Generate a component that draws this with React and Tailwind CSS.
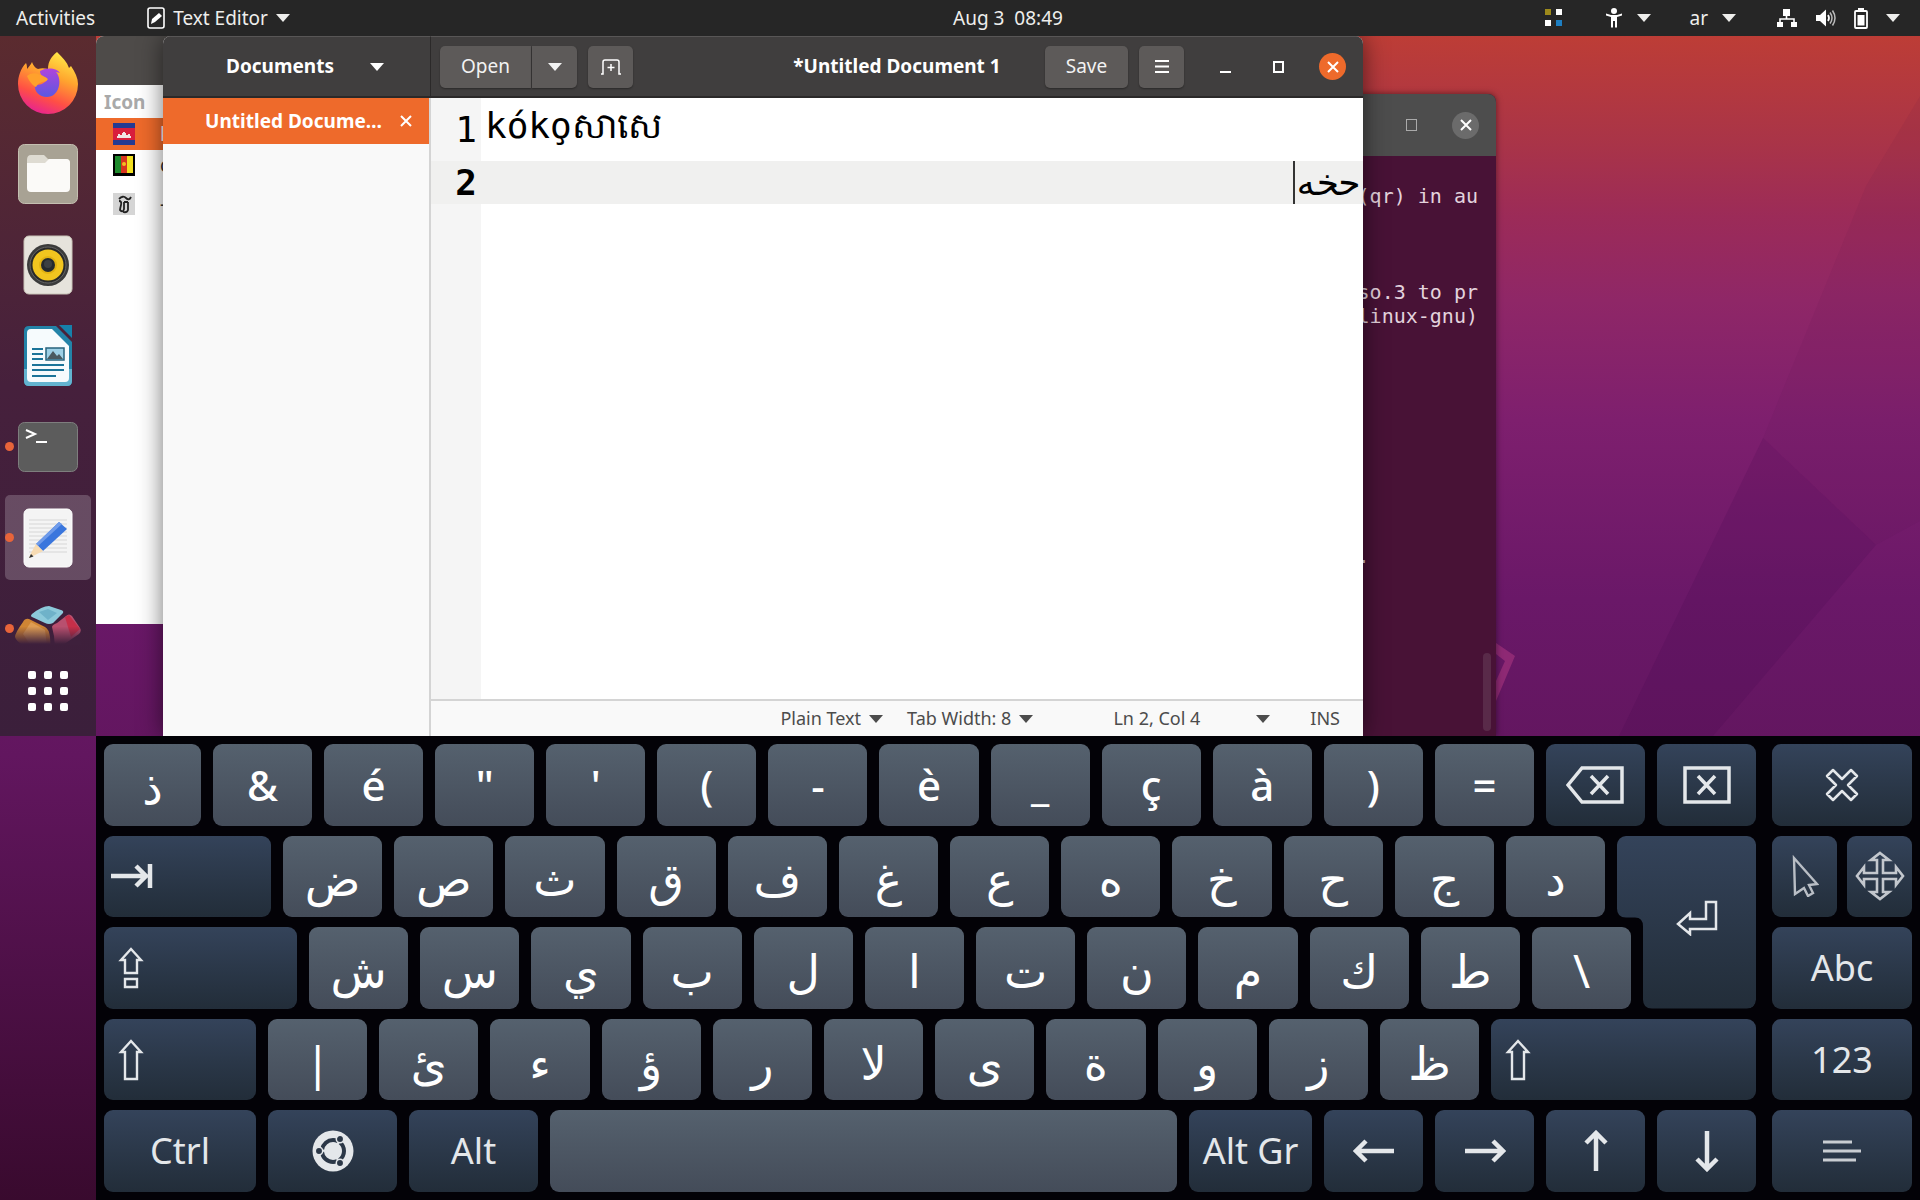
import { useState } from "react";

function Caret({ className = "" }) {
  return (
    <svg viewBox="0 0 14 8" className={`w-[14px] h-2 shrink-0 ${className}`}>
      <path d="M0 0h14L7 8z" fill="currentColor" />
    </svg>
  );
}

/* ---------- top bar ---------- */

function TopBar() {
  return (
    <header className="grid h-9 grid-cols-[1fr_auto_1fr] items-center bg-[#262626] pl-24 text-[19px] text-[#eeeeec]">
      <div className="-ml-24 flex items-center pl-4">
        <button type="button">Activities</button>
        <button type="button" className="ml-[52px] flex items-center gap-2">
          <svg viewBox="0 0 18 22" className="h-[22px] w-[18px]" fill="none">
            <rect x="1" y="1" width="16" height="20" rx="2" stroke="#fff" strokeWidth="1.6" />
            <path d="M4 17l1-5 7-6 3 3-7 6z" fill="#fff" />
          </svg>
          Text Editor
          <Caret />
        </button>
      </div>
      <button type="button" className="whitespace-pre">
        Aug 3  08:49
      </button>
      <div className="flex items-center justify-end pr-5">
        <svg viewBox="0 0 18 18" className="mr-[42px] h-[18px] w-[18px]">
          <rect width="6" height="6" fill="#9d8a1c" />
          <rect x="11" width="6" height="6" fill="#fff" />
          <rect y="11" width="6" height="6" fill="#fff" />
          <rect x="11" y="11" width="6" height="6" fill="#1e7fc2" />
        </svg>
        <button type="button" aria-label="Accessibility" className="flex items-center gap-[14px]">
          <svg viewBox="0 0 18 20" className="h-5 w-[18px]" fill="#fff">
            <circle cx="9" cy="3" r="3" />
            <path d="M1 5.5l5 1.5h6l5-1.5v2L12 9v10.500h-2V13H8v6.500H6V9L1 7.500z" />
          </svg>
          <Caret />
        </button>
        <button type="button" className="ml-[38px] flex items-center gap-[14px]">
          ar
          <Caret />
        </button>
        <button type="button" aria-label="System" className="ml-10 flex items-center gap-[18px]">
          <svg viewBox="0 0 22 19" className="h-[19px] w-[22px]" fill="#fff">
            <path d="M7 0h7v7H7zM1 13h6v5H1zM15 13h6v5h-6z" />
            <path d="M10.500 7v3M4 13v-3h14v3" stroke="#fff" strokeWidth="1.600" fill="none" />
          </svg>
          <svg viewBox="0 0 20 18" className="h-[18px] w-5" fill="none">
            <path d="M0 6h4l6-5.500v17L4 12H0z" fill="#fff" />
            <path d="M12 6q2 3 0 6" stroke="#fff" strokeWidth="1.800" />
            <path d="M14 3.500q4 5.500 0 11M16.500 1.500q5 7.500 0 15" stroke="#bbb" strokeWidth="1.500" />
          </svg>
          <svg viewBox="0 0 14 21" className="h-[21px] w-[14px]" fill="#fff">
            <path d="M4 0h6v3H4z" />
            <rect x="1" y="3" width="12" height="17" rx="1" fill="none" stroke="#fff" strokeWidth="1.800" />
            <path d="M3.500 7h7v10.500h-7z" />
          </svg>
          <Caret />
        </button>
      </div>
    </header>
  );
}

/* ---------- dock ---------- */

function Firefox() {
  return (
    <svg viewBox="0 0 60 62" className="h-[62px] w-[60px]">
      <defs>
        <linearGradient id="ff" x1=".8" y1="0" x2=".4" y2="1">
          <stop offset="0" stopColor="#fff04a" />
          <stop offset=".4" stopColor="#ffa52e" />
          <stop offset=".75" stopColor="#ff4f45" />
          <stop offset="1" stopColor="#e8268c" />
        </linearGradient>
        <linearGradient id="ffg" x1="0" y1="0" x2="0" y2="1">
          <stop offset="0" stopColor="#b044dd" />
          <stop offset="1" stopColor="#5b58e0" />
        </linearGradient>
      </defs>
      <path
        d="M39 0c6 6 10 10 12 16l2-2c4 6 7 12 7 18a30 30 0 0 1-60 0C0 24 3 16 8 11c1 2 1 4 1 6 2-2 4-5 5-7 1 3 3 6 6 7 3-1 6-1 10 0 0-8 4-13 9-17z"
        fill="url(#ff)"
      />
      <path
        d="M22 19c8-5 18-2 20 2l-4-1c7 8 3 25-9 25-8 0-13-6-12-12 5 0 9-1 13-6-4-2-8-3-8-8z"
        fill="url(#ffg)"
      />
      <path d="M9 24c6-5 12-2 18 1 3 1 3 3 1 4-4 1-8 2-10 6-3-1-7-6-9-11z" fill="#ffa12c" />
    </svg>
  );
}

function Files() {
  return (
    <svg viewBox="0 0 60 60" className="h-[60px] w-[60px]">
      <rect x=".5" y=".5" width="59" height="59" rx="6" fill="#a8a294" stroke="#c4bfb1" />
      <path d="M9 16q0-5 4-5h13l4 4h18q4 0 4 4v10H9z" fill="#dedbd2" />
      <path d="M9 19h18l4-4h17q4 0 4 4v25q0 4-4 4H13q-4 0-4-4z" fill="#fbfaf8" />
    </svg>
  );
}

function Rhythmbox() {
  return (
    <svg viewBox="0 0 50 60" className="h-[60px] w-[50px]">
      <rect x="1" y="1" width="48" height="58" rx="5" fill="#e6e3dc" stroke="#c9c4b8" />
      <circle cx="25" cy="30" r="21" fill="#3b3b3b" />
      <circle cx="25" cy="30" r="18" fill="#292929" stroke="#666" />
      <circle cx="25" cy="30" r="15.500" fill="#f2c51f" />
      <circle cx="25" cy="30" r="9" fill="#e3b312" />
      <circle cx="25" cy="30" r="7" fill="#252a2e" />
      <circle cx="25" cy="29" r="4" fill="#3c4043" />
    </svg>
  );
}

function Writer() {
  return (
    <svg viewBox="0 0 50 62" className="h-[62px] w-[50px]">
      <path d="M6 1h27l16 16v39q0 5-5 5H6q-5 0-5-5V6q0-5 5-5z" fill="#2383a8" />
      <path d="M1 44h48v12q0 5-5 5H6q-5 0-5-5z" fill="#63b4d0" />
      <path d="M36 0h13v13z" fill="#1681ab" />
      <path d="M8 4h21l17 17v32q0 4-4 4H8q-4 0-4-4V8q0-4 4-4z" fill="#f6fbfd" />
      <path
        d="M9 24h11M9 29h11M9 34h11M9 40h32M9 45h32M9 51h24"
        stroke="#1b7499"
        strokeWidth="2"
      />
      <rect x="23" y="23" width="18" height="12" fill="#9dd0e6" stroke="#27637c" strokeWidth="1.500" />
      <path d="M24 34l6-8 4 5 2-2 4 5z" fill="#4a5a60" />
    </svg>
  );
}

function TerminalIcon() {
  return (
    <svg viewBox="0 0 60 50" className="h-[50px] w-[60px]">
      <rect x=".5" y=".5" width="59" height="49" rx="6" fill="#5c5c5c" stroke="#7e7e7e" />
      <path d="M8 8l9 4-9 4M18 20h11" stroke="#fff" strokeWidth="2" fill="none" />
    </svg>
  );
}

function Gedit() {
  return (
    <svg viewBox="0 0 50 60" className="h-[60px] w-[50px]">
      <rect x="1" y="1" width="48" height="58" rx="5" fill="#f4f4f4" stroke="#fff" />
      <path
        d="M6 12h38M6 16h38M6 20h38M6 24h38M6 28h38M6 32h38M6 36h38M6 40h38M6 44h38"
        stroke="#d6d6d6"
      />
      <path d="M36 14l8 7-24 22-7-7z" fill="#3a76dd" />
      <path d="M36 14l3 2-24 22-2-2z" fill="#6f9bea" />
      <path d="M13 36l7 7-10 5-4 2 2-5z" fill="#f7dcb4" />
      <path d="M8 46l2.500 2.500L6 50z" fill="#333" />
    </svg>
  );
}

function Onboard() {
  return (
    <svg viewBox="0 0 66 50" className="h-[50px] w-[66px]">
      <defs>
        <linearGradient id="fade" x1="0" y1="0" x2="0" y2="1">
          <stop offset=".45" stopColor="#3e203c" stopOpacity="0" />
          <stop offset=".8" stopColor="#3e203c" />
        </linearGradient>
      </defs>
      <path d="M17 10q10-8 17-8l12 4q3 1 2 3l-10 10q-4 2-8 0l-13-6q-2-1 0-3z" fill="#8cc9da" />
      <path d="M24 8l9-3 9 4-9 7z" fill="#6fb2c9" />
      <path d="M0 33q0-4 8-15 2-4 6-3l16 8q4 2 5 10l1 15H22Q2 40 0 33z" fill="#cf8534" />
      <path d="M8 30l8-12 14 8 2 16H16z" fill="#dd9c53" />
      <path d="M37 23q0-2 5-4l9-7q3-3 6 0l8 12q2 3-1 6L48 41l-8 3-1-12z" fill="#b8506f" />
      <path d="M50 13l4-2 11 14-9 8z" fill="#c62f49" />
      <rect width="66" height="50" fill="url(#fade)" />
    </svg>
  );
}

const launchers = [
  { name: "Firefox", Icon: Firefox },
  { name: "Files", Icon: Files },
  { name: "Rhythmbox", Icon: Rhythmbox },
  { name: "LibreOffice Writer", Icon: Writer },
  { name: "Terminal", Icon: TerminalIcon, running: true },
  { name: "Text Editor", Icon: Gedit, running: true, active: true },
  { name: "Onboard", Icon: Onboard, running: true },
];

function Dock() {
  return (
    <nav className="flex min-h-0 flex-col bg-gradient-to-b from-[#5b2b2f] via-[#46203c] to-[#3b1f3b]">
      <ul className="flex h-0 grow flex-col gap-[6px] overflow-hidden pt-1">
        {launchers.map(({ name, Icon, running, active }) => (
          <li key={name} className="relative shrink-0 px-[5px]">
            <button
              type="button"
              aria-label={name}
              className={`flex h-[85px] w-full items-center justify-center rounded-[5px] ${active ? "bg-white/20" : ""}`}
            >
              <Icon />
            </button>
            {running && (
              <span className="absolute left-[5px] top-[38px] h-[9px] w-[9px] rounded-full bg-[#e8643a]" />
            )}
          </li>
        ))}
      </ul>
      <button type="button" aria-label="Show Applications" className="flex h-[91px] shrink-0 items-center justify-center">
        <span className="grid grid-cols-3 gap-2">
          {Array.from({ length: 9 }, (_, i) => (
            <span key={i} className="h-2 w-2 rounded-[2px] bg-white" />
          ))}
        </span>
      </button>
    </nav>
  );
}

/* ---------- desktop windows ---------- */

function IconWindow() {
  return (
    <section className="absolute left-0 top-0 h-[588px] w-[160px] overflow-hidden rounded-tl-lg bg-white">
      <div className="h-[49px] bg-[#4e4b49]" />
      <table className="w-full border-collapse text-left text-[19px] leading-6">
        <thead>
          <tr className="h-[33px] text-[#a9a9a9]">
            <th className="w-16 pl-2 font-bold">Icon</th>
            <th />
          </tr>
        </thead>
        <tbody className="align-middle">
          <tr className="h-8 bg-[#ee6a2b] text-white">
            <td className="pl-[17px]">
              <svg viewBox="0 0 22 22" className="h-[22px] w-[22px]">
                <path fill="#243a92" d="M0 0h22v22H0z" />
                <path fill="#d81e3c" d="M0 5h22v12H0z" />
                <path fill="#f1e4e4" d="M4 15v-2h1v-2h2v1h2v-2h1V9h2v1h1v2h2v-1h2v2h1v2z" />
              </svg>
            </td>
            <td>km</td>
          </tr>
          <tr className="h-[30px] text-[#333]">
            <td className="pl-[17px]">
              <svg viewBox="0 0 22 22" className="h-[22px] w-[22px]">
                <path d="M0 0h22v22H0z" />
                <path fill="#1e8a2c" d="M2 2h6v17H2z" />
                <path fill="#d8341f" d="M8 2h6v17H8z" />
                <path fill="#f3e020" d="M14 2h6v17h-6z" />
                <circle cx="11" cy="10" r="2" fill="#f3c020" />
              </svg>
            </td>
            <td>cm</td>
          </tr>
          <tr className="h-12 text-[#333]">
            <td className="pl-[17px]">
              <svg viewBox="0 0 22 22" className="h-[22px] w-[22px]" fill="none" stroke="#222" strokeWidth="1.800">
                <path d="M0 0h22v22H0z" fill="#d5d5d5" stroke="none" />
                <path d="M6 6q4-4 7-1t5-1M6 8q3 0 2 4t-1 5q3 3 4-1V9M15 9v8q-1 3-5 2M11 9h4" />
              </svg>
            </td>
            <td>-</td>
          </tr>
        </tbody>
      </table>
    </section>
  );
}

function TerminalWindow() {
  return (
    <section className="absolute bottom-0 right-[424px] top-[58px] flex w-[240px] flex-col overflow-hidden rounded-t-lg bg-[#481236] shadow-[0_0_6px_rgba(0,0,0,0.5)]">
      <div className="flex h-[62px] items-center justify-end gap-[35px] bg-[#4d4d4d] pr-[17px]">
        <button type="button" aria-label="Maximize" className="h-3 w-[11px] border border-[#aaa]" />
        <button
          type="button"
          aria-label="Close"
          className="flex h-[27px] w-[27px] items-center justify-center rounded-full bg-[#6b6b6b]"
        >
          <Cross className="text-white" />
        </button>
      </div>
      <div className="flex grow justify-end">
        <pre className="pt-7 font-['DejaVu_Sans_Mono',monospace] text-[20px] leading-6 text-[#e3d3dd]">
          {"(qr) in au\n\n\n\nso.3 to pr\nlinux-gnu)\n\n\n\n\n\n\n\n\n\n."}
        </pre>
        <div className="flex w-[18px] items-end justify-center pb-[5px]">
          <span className="h-[78px] w-2 rounded-full bg-[#592a49]" />
        </div>
      </div>
    </section>
  );
}

function Cross({ className = "" }) {
  return (
    <svg viewBox="0 0 12 12" className={`h-3 w-3 ${className}`} fill="none">
      <path d="M1 1l10 10M11 1L1 11" stroke="currentColor" strokeWidth="2" />
    </svg>
  );
}

const headerButton = "flex h-[42px] items-center justify-center bg-[#5d5a59] shadow-[0_1px_2px_rgba(0,0,0,0.35)]";

function EditorWindow() {
  const [first, setFirst] = useState("kóko̧សាសេ");
  const [second, setSecond] = useState("حخه");

  return (
    <section className="absolute inset-y-0 left-[67px] right-[557px] grid grid-cols-[268px_1fr] grid-rows-[62px_1fr] overflow-hidden rounded-t-lg bg-[#f8f8f8] shadow-[0_0_24px_rgba(0,0,0,0.55)]">
      <div className="flex items-center justify-center border-b-2 border-r border-t border-[#2b2929] border-t-[#585656] bg-[#403e3e] text-white">
        <button type="button" className="flex items-center gap-9 pl-[17px] text-[19px] font-bold">
          Documents
          <Caret />
        </button>
      </div>

      <div className="grid grid-cols-[1fr_auto_1fr] items-center border-b-2 border-t border-[#2b2929] border-t-[#585656] bg-[#403e3e] px-[9px] text-[19px] text-[#f2f2f2]">
        <div className="flex">
          <button type="button" className={`${headerButton} w-[91px] rounded-l-[5px]`}>
            Open
          </button>
          <button type="button" aria-label="Recent files" className={`${headerButton} ml-px w-[45px] rounded-r-[5px]`}>
            <Caret />
          </button>
          <button type="button" aria-label="New tab" className={`${headerButton} ml-[11px] w-[45px] rounded-[5px]`}>
            <svg viewBox="0 0 20 16" className="h-4 w-5" fill="none" stroke="#fff" strokeWidth="1.500">
              <path d="M0 15h2V3q0-2 2-2h12q2 0 2 2v12h2M10 5v7M6.500 8.500h7" />
            </svg>
          </button>
        </div>
        <h1 className="font-bold text-white">*Untitled Document 1</h1>
        <div className="flex items-center justify-end pr-2">
          <button type="button" className={`${headerButton} w-[83px] rounded-[5px]`}>
            Save
          </button>
          <button type="button" aria-label="Menu" className={`${headerButton} ml-[11px] w-[45px] rounded-[5px]`}>
            <svg viewBox="0 0 14 13" className="h-[13px] w-[14px]" stroke="#fff" strokeWidth="2">
              <path d="M0 1h14M0 6.500h14M0 12h14" />
            </svg>
          </button>
          <button type="button" aria-label="Minimize" className="ml-9 flex h-3 w-[11px] items-end">
            <span className="h-[2px] w-full bg-white" />
          </button>
          <button type="button" aria-label="Maximize" className="ml-[42px] h-3 w-[11px] border-2 border-white" />
          <button
            type="button"
            aria-label="Close"
            className="ml-[35px] flex h-[27px] w-[27px] items-center justify-center rounded-full bg-[#ee6a2b]"
          >
            <Cross className="text-white" />
          </button>
        </div>
      </div>

      <aside className="border-r-2 border-[#d4d4d4] bg-[#f9f9f9]">
        <div className="flex h-[46px] items-center justify-end gap-[18px] bg-[#ee6a2b] pr-[17px] text-[19px] font-bold text-white">
          Untitled Docume…
          <button type="button" aria-label="Close document">
            <Cross />
          </button>
        </div>
      </aside>

      <div className="flex flex-col">
        <div className="flex grow flex-col bg-[linear-gradient(to_right,#f5f5f5_50px,#fff_50px)] font-['DejaVu_Sans_Mono',monospace] text-[36px] text-black">
          <div className="flex h-[63px] items-center">
            <span className="w-[50px] pr-1 text-right">1</span>
            <input
              aria-label="Line 1"
              value={first}
              onChange={(e) => setFirst(e.target.value)}
              className="h-[62px] min-w-0 grow pl-1 outline-none"
            />
          </div>
          <div className="relative flex h-[43px] items-center bg-[#f0f0ef]">
            <span className="w-[50px] pr-1 text-right font-bold">2</span>
            <input
              aria-label="Line 2"
              dir="rtl"
              value={second}
              onChange={(e) => setSecond(e.target.value)}
              className="min-w-0 grow pr-[3px] outline-none"
            />
            <span className="absolute inset-y-0 right-[68px] w-[2px] bg-[#333]" />
          </div>
        </div>
        <footer className="flex h-[37px] items-center justify-end border-t-2 border-[#d4d4d4] bg-[#f9f9f9] pr-[23px] text-[18px] text-[#4c4c4c]">
          <button type="button" className="flex items-center gap-2">
            Plain Text
            <Caret />
          </button>
          <button type="button" className="ml-6 flex items-center gap-2">
            Tab Width: 8
            <Caret />
          </button>
          <button type="button" className="ml-20 flex items-center gap-14">
            Ln 2, Col 4
            <Caret />
          </button>
          <span className="ml-10">INS</span>
        </footer>
      </div>
    </section>
  );
}

function Desktop() {
  return (
    <main className="relative min-h-[640px] overflow-hidden">
      <svg
        viewBox="0 0 424 700"
        preserveAspectRatio="none"
        className="absolute bottom-0 right-0 top-0 h-full w-[424px]"
      >
        <path d="M267 402L370 150 424 60v425l-44 24z" fill="#4a0a4a" opacity=".06" />
        <path d="M267 402l113 107-163 191H123z" fill="#3a0a4a" opacity=".15" />
        <path d="M0 607l19 13L0 665v-20l9-20-9-7z" fill="#a8357e" opacity=".6" />
      </svg>
      <IconWindow />
      <TerminalWindow />
      <EditorWindow />
    </main>
  );
}

/* ---------- on-screen keyboard ---------- */

const letterStyle =
  "bg-gradient-to-b from-[#55616e] to-[#444c59] text-white font-['Noto_Sans','DejaVu_Sans',sans-serif]";
const controlStyle =
  "bg-gradient-to-b from-[#34435a] to-[#222d39] text-[36px] text-[#e4e7ea] font-['Noto_Sans','DejaVu_Sans',sans-serif]";

function Key({ label, dark, className = "flex-1", children }) {
  return (
    <button
      type="button"
      aria-label={label}
      className={`flex min-w-0 items-center justify-center whitespace-nowrap rounded-[9px] leading-none ${dark ? controlStyle : letterStyle} ${className}`}
    >
      {children || label}
    </button>
  );
}

function Letters({ keys }) {
  return keys.map((k) => <Key key={k} label={k} className="flex-1 pt-1 text-[46px]" />);
}

function Symbols({ keys }) {
  return keys.map((k) => <Key key={k} label={k} className="flex-1 text-[42px] font-medium" />);
}

function ShiftIcon() {
  return (
    <svg viewBox="0 0 26 42" className="h-[42px] w-[26px]" fill="none" stroke="currentColor" strokeWidth="2.400">
      <path d="M13 2l10 11h-4v27H7V13H3z" />
    </svg>
  );
}

function LongArrow({ className = "" }) {
  return (
    <svg viewBox="0 0 42 24" className={`h-6 w-[42px] ${className}`} fill="none" stroke="currentColor" strokeWidth="4.500">
      <path d="M3 12h38M13 2L3 12l10 10" />
    </svg>
  );
}

function UbuntuLogo() {
  return (
    <svg viewBox="0 0 42 42" className="h-[42px] w-[42px]">
      <circle cx="21" cy="21" r="20.500" fill="#e4e7ea" />
      <circle cx="21" cy="21" r="11" fill="none" stroke="#2b3747" strokeWidth="4" strokeDasharray="20.500 2.530" strokeDashoffset="10" />
      <g fill="#2b3747" stroke="#e4e7ea" strokeWidth="1.500">
        <circle cx="7" cy="21" r="3.700" />
        <circle cx="28" cy="9" r="3.700" />
        <circle cx="28" cy="33" r="3.700" />
      </g>
    </svg>
  );
}

function Keyboard() {
  return (
    <section aria-label="Keyboard" className="flex h-[464px] gap-4 bg-[#030207] p-2">
      <div className="grid min-w-0 flex-1 grid-rows-5 gap-[10px]">
        <div className="flex gap-3">
          <Key label="ذ" className="w-[97px] pt-1 text-[46px]" />
          <Symbols keys={["&", "é", '"', "'", "(", "-", "è", "_", "ç", "à", ")", "="]} />
          <Key label="Backspace" dark>
            <svg viewBox="0 0 58 38" className="h-[38px] w-[58px]" fill="none" stroke="currentColor" strokeWidth="3.500">
              <path d="M2 19L16 2h40v34H16zM25 10l17 18M42 10L25 28" />
            </svg>
          </Key>
          <Key label="Delete" dark>
            <svg viewBox="0 0 48 38" className="h-[38px] w-12" fill="none" stroke="currentColor" strokeWidth="3.500">
              <path d="M2 2h44v34H2zM15 10l17 18M32 10L15 28" />
            </svg>
          </Key>
        </div>

        <div className="row-span-2 grid grid-cols-[1fr_139px] grid-rows-2 gap-x-3 gap-y-[10px]">
          <div className="flex gap-3">
            <Key label="Tab" dark className="w-[167px] justify-start! pl-[7px]">
              <svg viewBox="0 0 42 24" className="h-6 w-[42px]" fill="none" stroke="currentColor" strokeWidth="4.500">
                <path d="M0 12h35M25 2l10 10-10 10M39 0v24" />
              </svg>
            </Key>
            <Letters keys={["ض", "ص", "ث", "ق", "ف", "غ", "ع", "ه", "خ", "ح", "ج", "د"]} />
          </div>
          <Key
            label="Enter"
            dark
            className="row-span-2 pb-2 pl-5 [clip-path:path('M9_0H130Q139_0_139_9V164Q139_173_130_173H35Q26_173_26_164V91Q26_82_18_82H9Q0_82_0_73V9Q0_0_9_0Z')]"
          >
            <svg viewBox="0 0 42 36" className="h-9 w-[42px]" fill="none" stroke="currentColor" strokeWidth="2.500">
              <path d="M30 2h10v27H14v5L2 24l12-11v6h16z" />
            </svg>
          </Key>
          <div className="-mr-[26px] flex gap-3">
            <Key label="Caps Lock" dark className="w-[193px] justify-start! pl-[14px]">
              <svg viewBox="0 0 26 42" className="h-[42px] w-[26px]" fill="none" stroke="currentColor" strokeWidth="2.400">
                <path d="M13 2l10 11h-4v13H7V13H3zM7 32h12v8H7z" />
              </svg>
            </Key>
            <Letters keys={["ش", "س", "ي", "ب", "ل", "ا", "ت", "ن", "م", "ك", "ط", "\\"]} />
          </div>
        </div>

        <div className="flex gap-3">
          <Key label="Left Shift" dark className="w-[152px] justify-start! pl-[14px]">
            <ShiftIcon />
          </Key>
          <Letters keys={["|", "ئ", "ء", "ؤ", "ر", "لا", "ى", "ة", "و", "ز", "ظ"]} />
          <Key label="Right Shift" dark className="w-[265px] justify-start! pl-[14px]">
            <ShiftIcon />
          </Key>
        </div>

        <div className="flex gap-3">
          <Key label="Ctrl" dark className="w-[152px]" />
          <Key label="Super" dark className="w-[129px]">
            <UbuntuLogo />
          </Key>
          <Key label="Alt" dark className="w-[129px]" />
          <Key label="Space" className="flex-1">
            <span />
          </Key>
          <Key label="Alt Gr" dark className="w-[123px]" />
          <Key label="Left" dark className="w-[99px]">
            <LongArrow />
          </Key>
          <Key label="Right" dark className="w-[99px]">
            <LongArrow className="rotate-180" />
          </Key>
          <Key label="Up" dark className="w-[99px]">
            <LongArrow className="rotate-90" />
          </Key>
          <Key label="Down" dark className="w-[99px]">
            <LongArrow className="-rotate-90" />
          </Key>
        </div>
      </div>

      <div className="grid w-[140px] grid-rows-5 gap-[10px]">
        <Key label="Hide keyboard" dark>
          <svg viewBox="0 0 34 34" className="h-[34px] w-[34px]" fill="none" stroke="currentColor" strokeWidth="2.500">
            <path d="M2 8l6-6 9 9 9-9 6 6-9 9 9 9-6 6-9-9-9 9-6-6 9-9z" strokeLinejoin="round" />
          </svg>
        </Key>
        <div className="flex gap-[10px]">
          <Key label="Click" dark>
            <svg viewBox="0 0 28 42" className="h-[42px] w-7" fill="none" stroke="#b9bec5" strokeWidth="2.400">
              <path d="M3 3l23 26-8 1 4 8-5 3-4-8-9 6z" />
            </svg>
          </Key>
          <Key label="Move" dark>
            <svg viewBox="0 0 50 50" className="h-[50px] w-[50px]" fill="none" stroke="#c3c7cd" strokeWidth="2.600">
              <path d="M25 2l9 7h-6v13h13v-6l7 9-7 9v-6H28v13h6l-9 7-9-7h6V28H9v6l-7-9 7-9v6h13V9h-6z" />
            </svg>
          </Key>
        </div>
        <Key label="Abc" dark />
        <Key label="123" dark />
        <Key label="Menu" dark>
          <svg viewBox="0 0 38 24" className="h-6 w-[38px]" stroke="#c9cdd2" strokeWidth="3">
            <path d="M0 3h29M0 12h38M0 21h33" />
          </svg>
        </Key>
      </div>
    </section>
  );
}

export default function App() {
  return (
    <div className="flex min-h-screen flex-col bg-[linear-gradient(180deg,#bd3d36_3%,#a93448_12%,#9c2b58_18%,#8f2767_25%,#7e1f6e_35%,#6a1868_50%,#62165f_63%,#390a2e_100%)] font-['Noto_Sans','Open_Sans',sans-serif]">
      <TopBar />
      <div className="grid grow grid-cols-[96px_minmax(0,1fr)] grid-rows-[1fr_auto]">
        <Dock />
        <Desktop />
        <div className="col-start-2">
          <Keyboard />
        </div>
      </div>
    </div>
  );
}
